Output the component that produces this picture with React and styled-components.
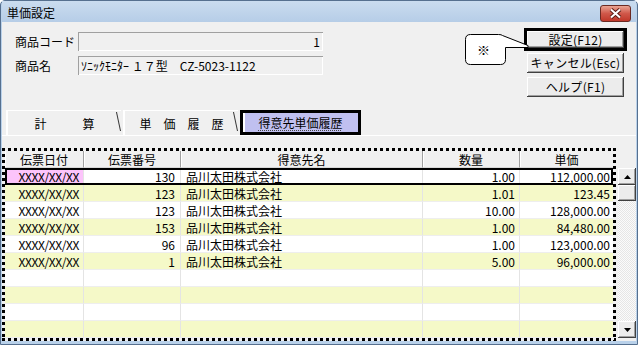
import styled, { createGlobalStyle } from "styled-components";

const GlobalStyle = createGlobalStyle`
  html, body {
    margin: 0;
    padding: 0;
    background: #ffffff;
  }
  body {
    font-family: "Noto Sans CJK JP", "Liberation Sans", sans-serif;
    font-size: 12px;
    color: #000;
  }
  * {
    box-sizing: border-box;
  }
`;

const Window = styled.div`
  position: relative;
  width: 638px;
  height: 345px;
  display: flex;
  flex-direction: column;
  border: 1px solid #56708f;
  border-radius: 5px 5px 0 0;
  padding: 0 1px 3px 1px;
  background: #b9d1ea;
`;

const TitleBar = styled.div`
  height: 25px;
  display: flex;
  justify-content: space-between;
  align-items: flex-start;
  background: linear-gradient(#cadcef, #b6cde7);
`;

const Title = styled.span`
  margin: 4px 0 0 5px;
  line-height: 16px;
  font-size: 12px;
`;

const CloseButton = styled.div`
  width: 31px;
  height: 17px;
  margin: 4px 5px 0 0;
  border: 1px solid #6b2a22;
  border-radius: 3px;
  background: linear-gradient(#e9a493, #d0584a 50%, #c0382a);
  display: flex;
  align-items: center;
  justify-content: center;
`;

const Body = styled.div`
  flex: 1;
  display: flex;
  flex-direction: column;
  background: #f0f0f0;
`;

const TopSection = styled.div`
  display: flex;
  justify-content: space-between;
  padding: 6px 12px 0 13px;
`;

const Fields = styled.div`
  margin-top: 4px;
  display: flex;
  flex-direction: column;
  gap: 5px;
`;

const FieldRow = styled.div`
  display: flex;
  align-items: center;
`;

const Label = styled.span`
  width: 63px;
  line-height: 16px;
`;

const Field = styled.div`
  width: 245px;
  height: 19px;
  padding: 0 3px;
  display: flex;
  align-items: center;
  justify-content: ${(p) => (p.$right ? "flex-end" : "flex-start")};
  background: #f0f0f0;
  box-shadow: inset 1px 1px #a0a0a0, inset -1px -1px #ffffff;
  font-size: 12px;
  line-height: 16px;
  white-space: pre;
`;

const Buttons = styled.div`
  width: 97px;
  display: flex;
  flex-direction: column;
`;

const Button = styled.div`
  height: ${(p) => (p.$default ? "23px" : "20px")};
  margin: ${(p) => (p.$default ? "0 -3px 2px" : "0 0 4px")};
  border: ${(p) => (p.$default ? "3px solid #000" : "none")};
  display: flex;
  align-items: center;
  justify-content: center;
  background: #ececec;
  box-shadow: inset -1px -1px #404040, inset 1px 1px #ffffff,
    inset -2px -2px #a0a0a0;
  line-height: 16px;
  letter-spacing: 0.3px;
`;

const Callout = styled.div`
  position: absolute;
  left: 462px;
  top: 31px;
  width: 68px;
  height: 34px;
`;

const CalloutMark = styled.span`
  position: absolute;
  left: 14px;
  top: 11px;
  font-size: 13px;
  line-height: 14px;
`;

const TabRow = styled.div`
  margin-top: 9px;
  height: 26px;
  padding-left: 4px;
  display: flex;
  border-bottom: 1px solid #ffffff;
`;

const Tab = styled.div`
  position: relative;
  width: ${(p) => (p.$active ? "121px" : "115px")};
  margin-right: ${(p) => (p.$active ? "0" : "2px")};
  display: flex;
  align-items: center;
  justify-content: center;
  gap: ${(p) => p.$gap || "0"};
  border: ${(p) => (p.$active ? "3px solid #000" : "none")};
  border-top: ${(p) => (p.$active ? "3px solid #000" : "1px solid #fff")};
  border-left: ${(p) => (p.$active ? "3px solid #000" : "2px solid #fff")};
  background: ${(p) => (p.$active ? "#c0c0f0" : "#f0f0f0")};
  box-shadow: ${(p) => (p.$active ? "inset 2px 0 #fff" : "none")};
  line-height: 16px;
  padding-top: 1px;

  &::after {
    content: "";
    display: ${(p) => (p.$active ? "none" : "block")};
    position: absolute;
    right: 2px;
    top: 1px;
    width: 1px;
    height: 19px;
    background: #333;
    transform: skewX(12deg);
  }
`;

const TabText = styled.span`
  text-decoration: ${(p) => (p.$focus ? "underline dotted #444" : "none")};
  text-underline-offset: 2px;
`;

const GridArea = styled.div`
  margin-top: 12px;
  display: flex;
  gap: 2px;
`;

const dots = (dir) =>
  `repeating-linear-gradient(${dir}, #000 0 3px, transparent 3px 6px)`;

const Grid = styled.div`
  width: 614px;
  height: 193px;
  padding: 3px;
  background: ${dots("90deg")} left top / 100% 3px no-repeat,
    ${dots("90deg")} left bottom / 100% 3px no-repeat,
    ${dots("180deg")} left top / 3px 100% no-repeat,
    ${dots("180deg")} right top / 3px 100% no-repeat, #f0f0f0;
`;

const columns = "79px 97px 242px 97px 93px";

const HeaderRow = styled.div`
  display: grid;
  grid-template-columns: ${columns};
  height: 17px;
`;

const HeaderCell = styled.div`
  display: flex;
  align-items: center;
  justify-content: center;
  border-right: 1px solid #a0a0a0;
  box-shadow: inset 1px 0 #ffffff;
  border-bottom: 1px solid #d8d8d8;
  line-height: 15px;
  &:last-child {
    border-right: none;
  }
`;

const Row = styled.div`
  display: grid;
  grid-template-columns: ${columns};
  height: 17px;
  background: ${(p) => (p.$alt ? "#f5f9c8" : "#ffffff")};
  outline: ${(p) => (p.$selected ? "2px solid #000" : "none")};
  outline-offset: -2px;
`;

const Cell = styled.div`
  display: flex;
  align-items: center;
  justify-content: ${(p) => p.$align || "flex-end"};
  padding: 0 ${(p) => p.$pad || "4px"};
  border-right: 1px solid #e4e4e4;
  border-bottom: 1px solid #eeeeee;
  background: ${(p) => p.$bg || "transparent"};
  line-height: 15px;
  white-space: pre;
  letter-spacing: ${(p) => p.$ls || "0"};
  &:last-child {
    border-right: none;
  }
`;

const ScrollBar = styled.div`
  margin-top: 20px;
  width: 18px;
  height: 170px;
  display: flex;
  flex-direction: column;
  background: repeating-conic-gradient(#fbfbfb 0 25%, #e6e6e6 0 50%) 0 0 /
    2px 2px;
`;

const ScrollButton = styled.div`
  height: ${(p) => p.$h || "17px"};
  display: flex;
  align-items: center;
  justify-content: center;
  background: #ececec;
  box-shadow: inset -1px -1px #404040, inset 1px 1px #ffffff,
    inset -2px -2px #a0a0a0;
`;

const Track = styled.div`
  flex: 1;
`;

const rows = [
  ["XXXX/XX/XX", "130", "品川太田株式会社", "1.00", "112,000.00"],
  ["XXXX/XX/XX", "123", "品川太田株式会社", "1.01", "123.45"],
  ["XXXX/XX/XX", "123", "品川太田株式会社", "10.00", "128,000.00"],
  ["XXXX/XX/XX", "153", "品川太田株式会社", "1.00", "84,480.00"],
  ["XXXX/XX/XX", "96", "品川太田株式会社", "1.00", "123,000.00"],
  ["XXXX/XX/XX", "1", "品川太田株式会社", "5.00", "96,000.00"],
  ["", "", "", "", ""],
  ["", "", "", "", ""],
  ["", "", "", "", ""],
  ["", "", "", "", ""],
];

const Arrow = ({ down }) => (
  <svg width="7" height="4" viewBox="0 0 7 4">
    <path d={down ? "M0 0H7L3.5 4Z" : "M0 4H7L3.5 0Z"} fill="#000" />
  </svg>
);

const App = () => {
  return (
    <>
      <GlobalStyle />
      <Window>
        <TitleBar>
          <Title>単価設定</Title>
          <CloseButton>
            <svg width="13" height="11" viewBox="0 0 13 11">
              <path d="M2 1.5L11 9.5M11 1.5L2 9.5" stroke="#5a1d16" strokeWidth="4" />
              <path d="M2 1.5L11 9.5M11 1.5L2 9.5" stroke="#fff" strokeWidth="2" />
            </svg>
          </CloseButton>
        </TitleBar>
        <Body>
          <TopSection>
            <Fields>
              <FieldRow>
                <Label>商品コード</Label>
                <Field $right>1</Field>
              </FieldRow>
              <FieldRow>
                <Label>商品名</Label>
                <Field>ｿﾆｯｸﾓﾆﾀｰ １７型　CZ-5023-1122</Field>
              </FieldRow>
            </Fields>
            <Buttons>
              <Button $default>設定(F12)</Button>
              <Button>キャンセル(Esc)</Button>
              <Button>ヘルプ(F1)</Button>
            </Buttons>
          </TopSection>

          <TabRow>
            <Tab $gap="36px">
              <span>計</span>
              <span>算</span>
            </Tab>
            <Tab $gap="12px">
              <span>単</span>
              <span>価</span>
              <span>履</span>
              <span>歴</span>
            </Tab>
            <Tab $active>
              <TabText $focus>得意先単価履歴</TabText>
            </Tab>
          </TabRow>

          <GridArea>
            <Grid>
              <HeaderRow>
                <HeaderCell>伝票日付</HeaderCell>
                <HeaderCell>伝票番号</HeaderCell>
                <HeaderCell>得意先名</HeaderCell>
                <HeaderCell>数量</HeaderCell>
                <HeaderCell>単価</HeaderCell>
              </HeaderRow>
              {rows.map((r, i) => (
                <Row key={i} $alt={i % 2 === 1} $selected={i === 0}>
                  <Cell $bg={i === 0 ? "#fcc4fb" : undefined} $ls="-0.4px">
                    {r[0]}
                  </Cell>
                  <Cell $pad="5px">{r[1]}</Cell>
                  <Cell $align="flex-start" $pad="5px">
                    {r[2]}
                  </Cell>
                  <Cell>{r[3]}</Cell>
                  <Cell $pad="3px">{r[4]}</Cell>
                </Row>
              ))}
            </Grid>
            <ScrollBar>
              <ScrollButton>
                <Arrow />
              </ScrollButton>
              <ScrollButton $h="16px" />
              <Track />
              <ScrollButton>
                <Arrow down />
              </ScrollButton>
            </ScrollBar>
          </GridArea>
        </Body>

        <Callout>
          <svg width="68" height="34" viewBox="0 0 68 34">
            <path
              d="M7.5 2.5H35.5Q38.5 2.5 39.5 3.5L65 13.5V15.5H42.5V27.5Q42.5 32.5 37.5 32.5H7.5Q2.5 32.5 2.5 27.5V7.5Q2.5 2.5 7.5 2.5Z"
              fill="#fff"
              stroke="#000"
              strokeWidth="1"
            />
          </svg>
          <CalloutMark>※</CalloutMark>
        </Callout>
      </Window>
    </>
  );
};

export default App;
